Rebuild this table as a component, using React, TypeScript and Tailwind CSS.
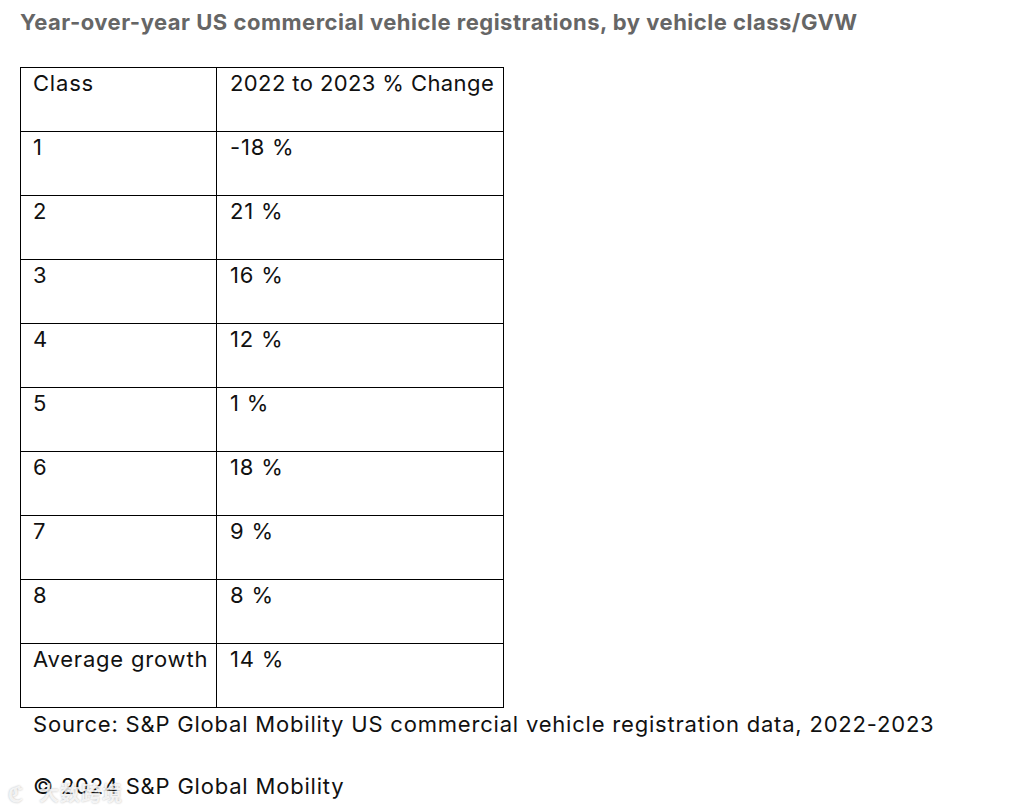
const rows: [string, string][] = [
  ['1', '-18 %'],
  ['2', '21 %'],
  ['3', '16 %'],
  ['4', '12 %'],
  ['5', '1 %'],
  ['6', '18 %'],
  ['7', '9 %'],
  ['8', '8 %'],
  ['Average growth', '14 %'],
];

export default function App() {
  return (
    <div className="relative w-[1025px] h-[812px] overflow-hidden bg-white font-['Inter',sans-serif] text-[#111]">
      <h2 className="pl-[20px] pt-[7px] text-[22px] leading-[30px] font-bold tracking-[0.5px] text-[#666] whitespace-nowrap">
        Year-over-year US commercial vehicle registrations, by vehicle class/GVW
      </h2>
      <table className="ml-[20px] mt-[30px] w-[484px] border-collapse text-[22px] leading-[28px] tracking-[0.8px]">
        <tbody>
          <tr className="h-[64px]">
            <td className="w-[196px] border border-black align-top pl-[12px] pt-[1px]">Class</td>
            <td className="border border-black align-top pl-[13px] pt-[1px] whitespace-nowrap tracking-[0.4px]">2022 to 2023 % Change</td>
          </tr>
          {rows.map(([c, v]) => (
            <tr key={c} className="h-[64px]">
              <td className="border border-black align-top pl-[12px] pt-[1px] whitespace-nowrap">{c}</td>
              <td className="border border-black align-top pl-[13px] pt-[1px]">{v}</td>
            </tr>
          ))}
        </tbody>
      </table>
      <p className="pl-[33px] pt-[2px] text-[22px] leading-[28px] tracking-[0.8px] whitespace-nowrap">
        Source: S&amp;P Global Mobility US commercial vehicle registration data, 2022-2023
      </p>
      <p className="pl-[33px] pt-[34px] text-[22px] leading-[28px] tracking-[0.8px]">© 2024 S&amp;P Global Mobility</p>
      <div className="absolute left-[8px] top-[776px] flex items-center gap-[16px] text-white/80 [text-shadow:0_0_2px_rgba(0,0,0,0.3)] font-['Noto_Sans_CJK_SC',sans-serif]">
        <span className="text-[22px] font-bold">ℭ</span>
        <span className="text-[20px] font-bold tracking-[1px]">大数跨境</span>
      </div>
    </div>
  );
}
